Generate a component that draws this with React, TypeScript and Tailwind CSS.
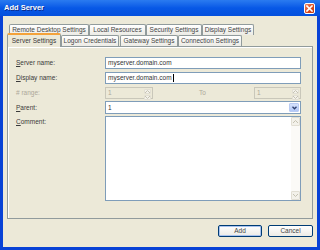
import React from 'react';

const font = "font-['Liberation_Sans',Arial,sans-serif]";

function Tab({ label, w, ml = 'ml-0', selected = false }: { label: string; w: string; ml?: string; selected?: boolean }) {
  if (selected) {
    return (
      <div
        className={`relative z-10 ${w} ${ml} -mb-px flex h-[14px] items-center justify-center rounded-t-[2px] border-x border-t-2 border-x-[#919B9C] border-t-[#F4A23A] bg-[#ECE9D8] pb-px text-[#3a3a3a]`}
      >
        {label}
      </div>
    );
  }
  return (
    <div
      className={`${w} ${ml} flex h-[11px] items-center justify-center rounded-t-[2px] border-x border-t border-[#919B9C] bg-gradient-to-b from-white to-[#ECEBE5] text-[#444]`}
    >
      {label}
    </div>
  );
}

function Spin({ w }: { w: string }) {
  return (
    <div className={`flex h-[12px] ${w} items-stretch border border-[#C9C7BA] bg-[#ECE9D8]`}>
      <div className="flex-1 pl-[2px] leading-[10px] text-[#ACA899]">1</div>
      <div className="flex w-[9px] flex-col gap-px p-px">
        <div className="flex flex-1 items-center justify-center rounded-[1px] border border-[#E2DFD4] bg-[#F3F1EA]">
          <svg width="5" height="3" viewBox="0 0 5 3"><path d="M0 3 L2.5 0.5 L5 3" fill="none" stroke="#C5C2B2" strokeWidth="1" /></svg>
        </div>
        <div className="flex flex-1 items-center justify-center rounded-[1px] border border-[#E2DFD4] bg-[#F3F1EA]">
          <svg width="5" height="3" viewBox="0 0 5 3"><path d="M0 0 L2.5 2.5 L5 0" fill="none" stroke="#C5C2B2" strokeWidth="1" /></svg>
        </div>
      </div>
    </div>
  );
}

function Label({ k, rest, disabled = false }: { k: string; rest: string; disabled?: boolean }) {
  return (
    <div className={`w-[89px] shrink-0 ${disabled ? 'text-[#ACA899]' : 'text-[#3a3a3a]'}`}>
      <span className={disabled ? '' : 'underline decoration-[0.5px] underline-offset-1'}>{k}</span>
      {rest}
    </div>
  );
}

export default function App() {
  return (
    <div className={`flex h-[250px] w-[320px] flex-col bg-[#0842D6] text-[6.5px] ${font}`}>
      {/* title bar */}
      <div className="flex h-[16px] items-center bg-gradient-to-b from-[#2A7BF0] via-[#0758E6] to-[#0450DD] pl-[4px] pr-[5px]">
        <div className="flex-1 text-[7.5px] font-bold text-white [text-shadow:1px_1px_0_#0A2A8A]">Add Server</div>
        <div className="flex h-[11px] w-[11px] items-center justify-center rounded-[2px] border border-white bg-gradient-to-br from-[#F08A66] via-[#DC4A1E] to-[#C13A10]">
          <svg width="7" height="7" viewBox="0 0 7 7">
            <path d="M1 1 L6 6 M6 1 L1 6" stroke="white" strokeWidth="1.6" strokeLinecap="square" />
          </svg>
        </div>
      </div>

      {/* body */}
      <div className="mx-[3px] mb-[3px] flex flex-1 flex-col bg-[#ECE9D8] px-[4px] pt-[8px]">
        <div className="flex h-[11px] items-end">
          <Tab label="Remote Desktop Settings" w="w-[80px]" ml="ml-[2px]" />
          <Tab label="Local Resources" w="w-[57px]" />
          <Tab label="Security Settings" w="w-[56px]" />
          <Tab label="Display Settings" w="w-[52px]" />
        </div>
        <div className="flex h-[11px] items-end">
          <Tab label="Server Settings" w="w-[54px]" selected />
          <Tab label="Logon Credentials" w="w-[58px]" />
          <Tab label="Gateway Settings" w="w-[58px]" ml="ml-px" />
          <Tab label="Connection Settings" w="w-[64px]" />
        </div>

        {/* panel */}
        <div className="flex h-[173px] flex-col border border-[#919B9C] bg-[#ECE9D8] pl-[8px] pr-[11px] pt-[10px] shadow-[inset_1px_1px_0_#FFFFFF]">
          <div className="flex h-[12px] items-center">
            <Label k="S" rest="erver name:" />
            <div className="flex h-full flex-1 items-center border border-[#7F9DB9] bg-white pl-[2px] text-[#333]">myserver.domain.com</div>
          </div>
          <div className="mt-[3px] flex h-[12px] items-center">
            <Label k="D" rest="isplay name:" />
            <div className="flex h-full flex-1 items-center border border-[#7F9DB9] bg-white pl-[2px] text-[#333]">
              myserver.domain.com<span className="ml-px inline-block h-[8px] w-px bg-black" />
            </div>
          </div>
          <div className="mt-[3px] flex h-[12px] items-center">
            <Label k="#" rest=" range:" disabled />
            <Spin w="w-[48px]" />
            <div className="ml-[46px] text-[#ACA899]">To</div>
            <div className="ml-auto">
              <Spin w="w-[47px]" />
            </div>
          </div>
          <div className="mt-[2px] flex h-[13px] items-center">
            <Label k="P" rest="arent:" />
            <div className="flex h-full flex-1 items-stretch border border-[#7F9DB9] bg-white">
              <div className="flex flex-1 items-center pl-[2px] text-[#333]">1</div>
              <div className="m-px flex w-[10px] items-center justify-center rounded-[1px] border border-[#B9CBF3] bg-gradient-to-b from-[#D6E2FC] to-[#B2C7F7]">
                <svg width="5" height="4" viewBox="0 0 5 4">
                  <path d="M0.5 0.8 L2.5 2.8 L4.5 0.8" fill="none" stroke="#2D3F6E" strokeWidth="1.3" />
                </svg>
              </div>
            </div>
          </div>
          <div className="mt-[2px] flex h-[85px] items-start">
            <div className="flex h-[12px] items-center">
              <Label k="C" rest="omment:" />
            </div>
            <div className="flex h-full flex-1 border border-[#7F9DB9] bg-white">
              <div className="flex-1" />
              <div className="flex w-[9px] flex-col justify-between bg-[#FBFAF7]">
                <div className="flex h-[9px] items-center justify-center rounded-[1px] border border-[#E2DFD4] bg-[#F3F1EA]">
                  <svg width="5" height="3" viewBox="0 0 5 3"><path d="M0 3 L2.5 0.5 L5 3" fill="none" stroke="#C5C2B2" strokeWidth="1" /></svg>
                </div>
                <div className="flex h-[9px] items-center justify-center rounded-[1px] border border-[#E2DFD4] bg-[#F3F1EA]">
                  <svg width="5" height="3" viewBox="0 0 5 3"><path d="M0 0 L2.5 2.5 L5 0" fill="none" stroke="#C5C2B2" strokeWidth="1" /></svg>
                </div>
              </div>
            </div>
          </div>
        </div>

        {/* buttons */}
        <div className="mt-[6px] flex justify-end gap-[6px]">
          <div className="flex h-[12px] w-[44px] items-center justify-center rounded-[2px] border border-[#003C74] bg-gradient-to-b from-white to-[#ECEBE6] text-[#444] shadow-[inset_0_0_0_1px_#A9C3EF]">
            Add
          </div>
          <div className="flex h-[12px] w-[45px] items-center justify-center rounded-[2px] border border-[#003C74] bg-gradient-to-b from-white to-[#ECEBE6] text-[#444]">
            Cancel
          </div>
        </div>
      </div>
    </div>
  );
}
